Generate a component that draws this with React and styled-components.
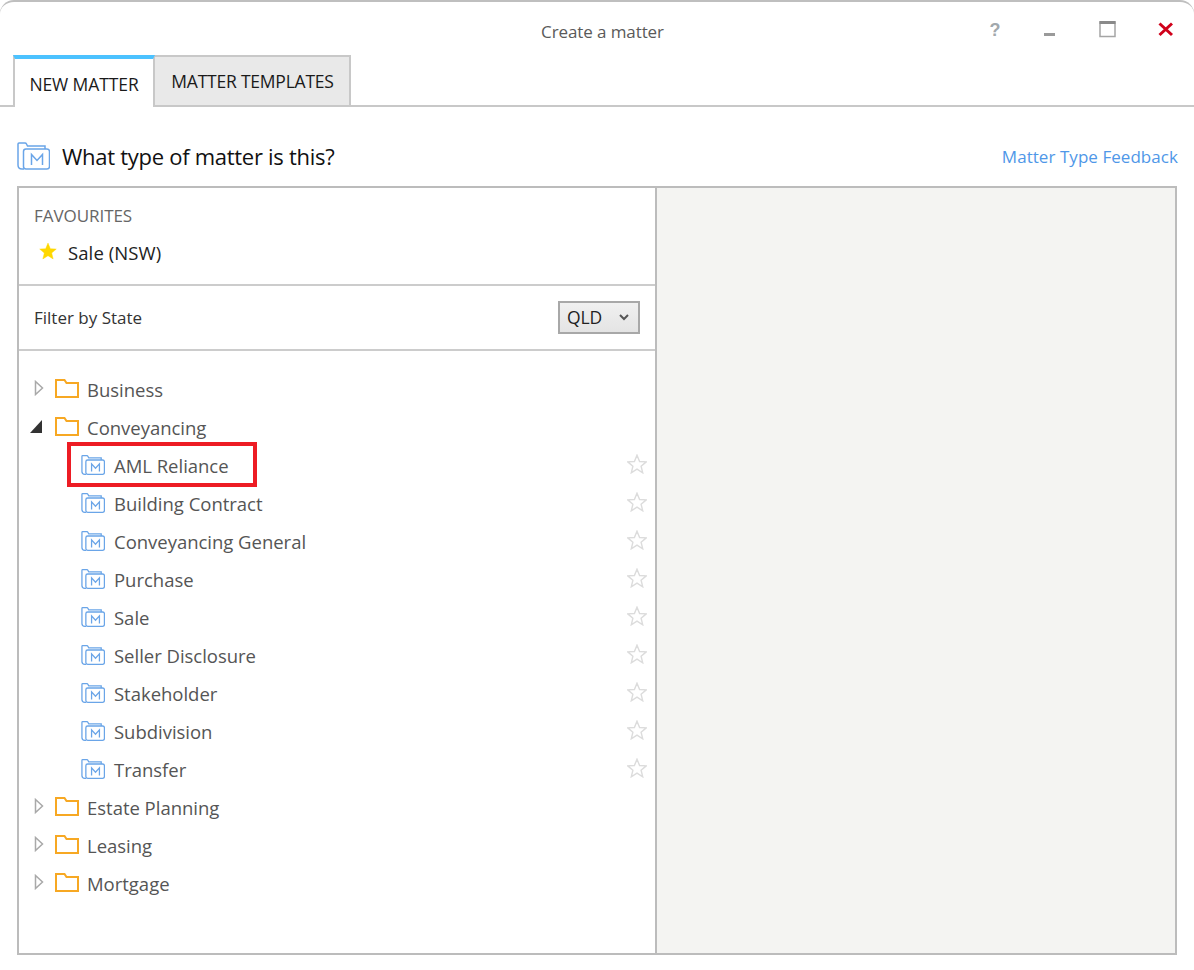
import React from "react";
import styled, { createGlobalStyle } from "styled-components";

const Global = createGlobalStyle`
  html, body { margin: 0; padding: 0; background: #fff; }
  body { font-family: "Open Sans", "Noto Sans", sans-serif; }
  * { box-sizing: border-box; }
`;

const Window = styled.div`
  width: 1194px; height: 970px; background: #fff; overflow: hidden;
  display: flex; flex-direction: column;
  border-top: 2px solid #bfbfbf;
  border-radius: 14px 14px 0 0;
`;
const TitleBar = styled.div`
  height: 53px; flex: none; position: relative;
  display: flex; align-items: flex-start; justify-content: center;
`;
const Title = styled.div`
  font-size: 17px; letter-spacing: -0.1px; color: #5a5a5a; line-height: 22px; margin-top: 19px; margin-left: 11px;
`;
const Controls = styled.div`
  position: absolute; left: 988px; top: 17px; display: flex; align-items: flex-start;
`;
const ControlIcon = styled.svg`
  display: block; flex: none; margin-right: ${p => p.$gap}px;
`;
const TabBar = styled.div`
  height: 52px; flex: none; display: flex; padding-left: 13px;
  border-bottom: 2px solid #c8c8c8;
`;
const ActiveTab = styled.div`
  width: 142px; height: 52px; background: #fff;
  border-top: 4px solid #4cc2ff; border-left: 2px solid #c8c8c8; border-right: 2px solid #c8c8c8;
  display: flex; align-items: center; justify-content: center;
  font-size: 17.5px; letter-spacing: -0.1px; color: #1a1a1a; padding-top: 2px;
`;
const Tab = styled.div`
  width: 196px; height: 50px; background: #e9e9e9;
  border: 2px solid #c8c8c8; border-left-width: 0; border-bottom-width: 0;
  display: flex; align-items: center; justify-content: center;
  font-size: 17.5px; letter-spacing: -0.22px; color: #1a1a1a; padding-left: 1px;
`;
const Heading = styled.div`
  height: 79px; flex: none; display: flex; align-items: center;
  padding: 19px 16px 0 17px;
`;
const HeadingIcon = styled.span` display: flex; margin-right: 12px; `;
const HeadingText = styled.div`
  font-size: 22px; letter-spacing: -0.28px; color: #111; line-height: 28px;
`;
const FeedbackLink = styled.a`
  margin-left: auto; font-size: 17px; letter-spacing: 0.05px; color: #4f97e8; text-decoration: none;
`;
const Panels = styled.div`
  margin-left: 17px; width: 1160px; height: 769px; flex: none;
  border: 2px solid #bcbcbc; display: flex;
`;
const LeftPane = styled.div`
  width: 638px; flex: none; display: flex; flex-direction: column;
  border-right: 2px solid #bcbcbc;
`;
const RightPane = styled.div` flex: 1; background: #f4f4f2; `;
const Favourites = styled.section`
  height: 98px; flex: none; padding: 17px 15px 0;
  border-bottom: 2px solid #ccc;
`;
const FavLabel = styled.div`
  font-size: 17px; letter-spacing: -0.05px; color: #666; line-height: 22px;
`;
const FavRow = styled.div`
  display: flex; align-items: center; margin-top: 12px; padding-left: 5px; height: 24px;
`;
const FavName = styled.span`
  font-size: 18.5px; letter-spacing: 0.1px; color: #222; margin-left: 11px; position: relative; top: 1px;
`;
const Filter = styled.section`
  height: 65px; flex: none; display: flex; align-items: center; justify-content: space-between;
  padding: 0 15px; border-bottom: 2px solid #ccc;
`;
const FilterLabel = styled.span`
  font-size: 17px; color: #333;
`;
const Select = styled.div`
  width: 82px; height: 33px; border: 2px solid #a8a8a8;
  background: linear-gradient(#f0f0f0, #e4e4e4);
  display: flex; align-items: center; justify-content: space-between;
  padding: 0 9px 0 7px; margin-top: -1px;
  font-size: 17.5px; letter-spacing: -0.1px; color: #222;
`;
const Tree = styled.div`
  flex: 1; padding-top: 19px; display: flex; flex-direction: column;
`;
const Row = styled.div`
  height: 38px; flex: none; position: relative; display: flex; align-items: center;
  padding-left: ${p => p.$indent}px; padding-right: 8px;
`;
const Arrow = styled.span`
  width: 25px; flex: none; display: flex;
  margin-top: -2px; padding-left: ${p => p.$open ? 0 : 4}px;
`;
const FolderWrap = styled.span` display: flex; margin-top: -1px; `;
const Label = styled.span`
  font-size: 18.5px; letter-spacing: -0.02px; color: #555; margin-left: ${p => p.$gap}px; line-height: 24px; position: relative; top: 1px;
`;
const Fav = styled.span` margin-left: auto; display: flex; margin-top: -2px; `;
const Annotation = styled.div`
  position: absolute; left: 48px; top: -4px; width: 190px; height: 45px;
  border: 4px solid #ed1c24; pointer-events: none;
`;

const MatterIcon = ({ w, h }) => (
  <svg width={w} height={h} viewBox="0 0 33 28" fill="none" stroke="#6aa5e8" strokeWidth={w > 30 ? 1.5 : 1.8} style={{ display: "block" }}>
    <path d="M7 27H5Q1 27 1 23V2Q1 1 2 1H8Q9 1 9.5 2L10.5 4H28V7" />
    <rect x="6.5" y="7" width="26" height="20" rx="2.5" fill="#fff" />
    <path d="M14.5 23V12.5L20 18.5L25.5 12.5V23" />
  </svg>
);
const FolderIcon = () => (
  <svg width="24" height="19" viewBox="0 0 24 19" fill="none" stroke="#f7a823" strokeWidth="2" style={{ display: "block" }}>
    <path d="M1 18V1H9.5L11.5 4H23V18Z" />
  </svg>
);
const Collapsed = () => (
  <svg width="10" height="16" viewBox="0 0 10 16" fill="none" stroke="#a9a9a9" strokeWidth="1.5">
    <path d="M1.5 1.5V14.5L8.5 8Z" />
  </svg>
);
const Expanded = () => (
  <svg width="12" height="13" viewBox="0 0 12 13">
    <path d="M0 13H12V0Z" fill="#333" />
  </svg>
);
const Star = ({ filled, size }) => (
  <svg width={size} height={size} viewBox="0 0 20 20" fill={filled ? "#ffd800" : "#fff"} stroke={filled ? "#ffd800" : "#dcdcdc"} strokeWidth={filled ? 0.5 : 1.4} strokeLinejoin="miter">
    <path d="M10 1.2L12.6 7.5L19.2 7.9L14.1 12.2L15.7 18.8L10 15.2L4.3 18.8L5.9 12.2L.8 7.9L7.4 7.5Z" />
  </svg>
);

const Folder = ({ name, open }) => (
  <Row $indent={11}>
    <Arrow $open={open}>{open ? <Expanded /> : <Collapsed />}</Arrow>
    <FolderWrap><FolderIcon /></FolderWrap>
    <Label $gap={8}>{name}</Label>
  </Row>
);
const Matter = ({ name, marked }) => (
  <Row $indent={62}>
    <MatterIcon w={24} h={20} />
    <Label $gap={9}>{name}</Label>
    <Fav><Star size={20} /></Fav>
    {marked && <Annotation />}
  </Row>
);

const children = ["Building Contract", "Conveyancing General", "Purchase", "Sale", "Seller Disclosure", "Stakeholder", "Subdivision", "Transfer"];

export default function App() {
  return (
    <>
      <Global />
      <Window>
        <TitleBar>
          <Title>Create a matter</Title>
          <Controls>
            <ControlIcon $gap={37} width="15" height="20" viewBox="0 0 15 20">
              <text x="1.5" y="17" fontFamily="'Liberation Sans', sans-serif" fontWeight="700" fontSize="18" fill="#a2a8ac">?</text>
            </ControlIcon>
            <ControlIcon $gap={40} width="17" height="20" viewBox="0 0 17 20">
              <rect x="4" y="14" width="11" height="3" fill="#9a9a9a" />
            </ControlIcon>
            <ControlIcon $gap={40} width="20" height="20" viewBox="0 0 20 20">
              <rect x="3" y="3" width="15" height="14.5" fill="none" stroke="#a5a5a5" strokeWidth="1.5" />
              <rect x="2.5" y="2" width="16" height="3" fill="#8a8a8a" />
            </ControlIcon>
            <ControlIcon $gap={0} width="18" height="20" viewBox="0 0 18 20">
              <path d="M2.5 4.5L15 16M15 4.5L2.5 16" stroke="#d0021b" strokeWidth="3" />
            </ControlIcon>
          </Controls>
        </TitleBar>
        <TabBar>
          <ActiveTab>NEW MATTER</ActiveTab>
          <Tab>MATTER TEMPLATES</Tab>
        </TabBar>
        <Heading>
          <HeadingIcon><MatterIcon w={33} h={28} /></HeadingIcon>
          <HeadingText>What type of matter is this?</HeadingText>
          <FeedbackLink href="#">Matter Type Feedback</FeedbackLink>
        </Heading>
        <Panels>
          <LeftPane>
            <Favourites>
              <FavLabel>FAVOURITES</FavLabel>
              <FavRow>
                <Star filled size={18} />
                <FavName>Sale (NSW)</FavName>
              </FavRow>
            </Favourites>
            <Filter>
              <FilterLabel>Filter by State</FilterLabel>
              <Select>
                QLD
                <svg width="10" height="7" viewBox="0 0 10 7" fill="none" stroke="#555" strokeWidth="2"><path d="M1 1L5 5L9 1" /></svg>
              </Select>
            </Filter>
            <Tree>
              <Folder name="Business" />
              <Folder name="Conveyancing" open />
              <Matter name="AML Reliance" marked />
              {children.map(n => <Matter key={n} name={n} />)}
              <Folder name="Estate Planning" />
              <Folder name="Leasing" />
              <Folder name="Mortgage" />
            </Tree>
          </LeftPane>
          <RightPane />
        </Panels>
      </Window>
    </>
  );
}
